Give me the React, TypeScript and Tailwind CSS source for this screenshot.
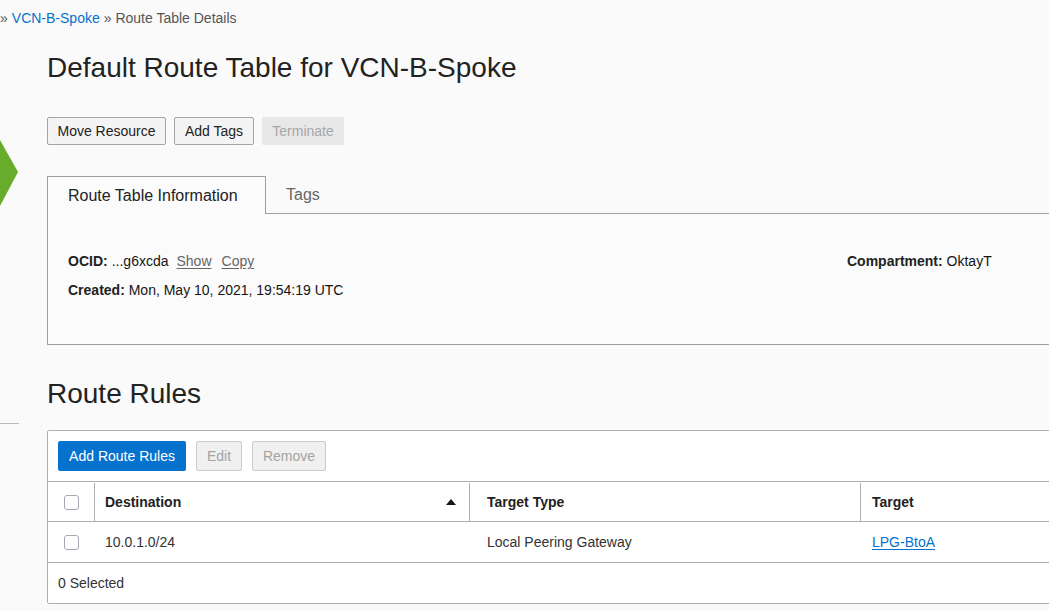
import React from "react";

const font = { fontFamily: '"Liberation Sans", Arial, sans-serif' };

const Checkbox = () => (
  <div className="w-[15px] h-[15px] rounded-[3px] border border-[#a3a9ae] bg-white"></div>
);

const App = () => {
  return (
    <div
      style={font}
      className="w-[1049px] h-[611px] overflow-hidden bg-[#fafafa] text-[#161513] text-[14px]"
    >
      {/* breadcrumb */}
      <div className="h-[36px] flex items-center text-[#555] leading-5 whitespace-nowrap">
        <span>»</span>
        <a className="ml-[4px] text-[#0572ce]">VCN-B-Spoke</a>
        <span className="ml-[4px]">» Route Table Details</span>
      </div>

      <div className="flex">
        {/* side strip */}
        <div className="w-[19px] shrink-0 flex flex-col">
          <svg width="19" height="66" viewBox="0 0 19 66" className="mt-[104px]">
            <polygon points="0,0 18,32 0,66" fill="#67ac2a" />
          </svg>
          <div className="mt-[217px] w-[19px] h-px bg-[#b8bcc0]"></div>
        </div>

        {/* main */}
        <div className="ml-[28px] w-[1100px] shrink-0">
          <h1 className="mt-[15px] h-[34px] text-[28px] leading-[34px] text-[#222] whitespace-nowrap">
            Default Route Table for VCN-B-Spoke
          </h1>

          <div className="mt-[32px] flex gap-2">
            <button className="h-[28px] w-[119px] rounded-[2px] border border-[#9ea5ab] bg-[#f4f4f4] text-[#222]">
              Move Resource
            </button>
            <button className="h-[28px] w-[80px] rounded-[2px] border border-[#9ea5ab] bg-[#f4f4f4] text-[#222]">
              Add Tags
            </button>
            <button className="h-[28px] w-[82px] rounded-[2px] border border-[#e6e6e6] bg-[#e8e8e8] text-[#a6a6a6]">
              Terminate
            </button>
          </div>

          {/* tabs */}
          <div className="mt-[31px] flex h-[38px]">
            <div className="w-[219px] border border-b-0 border-[#a0a0a0] bg-[#fbfbfb] flex items-center pl-5 pt-px text-[16px] text-[#222]">
              Route Table Information
            </div>
            <div className="flex-1 border-b border-[#a0a0a0] flex items-center pl-[20px] pt-px text-[16px] text-[#666]">
              Tags
            </div>
          </div>
          <div className="h-[131px] border border-t-0 border-[#a0a0a0] bg-[#fbfbfb] pl-5 pt-[37px] flex">
            <div className="w-[779px] flex flex-col gap-[9px]">
              <div className="leading-5 flex items-center">
                <span className="font-bold text-[#222]">OCID:</span>
                <span className="ml-[4px]">...g6xcda</span>
                <a className="ml-[8px] text-[#666] underline underline-offset-2">Show</a>
                <a className="ml-[10px] text-[#666] underline underline-offset-2">Copy</a>
              </div>
              <div className="leading-5">
                <span className="font-bold text-[#222]">Created:</span>{" "}
                Mon, May 10, 2021, 19:54:19 UTC
              </div>
            </div>
            <div className="leading-5">
              <span className="font-bold text-[#222]">Compartment:</span> OktayT
            </div>
          </div>

          <h2 className="mt-[32px] h-[34px] text-[28px] leading-[34px] text-[#222]">
            Route Rules
          </h2>

          {/* table */}
          <div className="mt-[19px] border border-[#aab0b6] rounded-[2px] bg-white">
            <div className="flex gap-[10px] px-[10px] py-[10px]">
              <button className="h-[30px] w-[128px] rounded-[2px] bg-[#0572ce] text-white">
                Add Route Rules
              </button>
              <button className="h-[30px] w-[46px] rounded-[2px] border border-[#c8cbce] bg-[#f0f0f0] text-[#a3a3a3]">
                Edit
              </button>
              <button className="h-[30px] w-[74px] rounded-[2px] border border-[#c8cbce] bg-[#f0f0f0] text-[#a3a3a3]">
                Remove
              </button>
            </div>

            <div className="flex h-[40px] border-t border-[#aab0b6] pt-px font-bold text-[#222]">
              <div className="w-[47px] flex items-center justify-center border-r border-[#aab0b6]">
                <Checkbox />
              </div>
              <div className="w-[375px] flex items-center pl-[10px] pr-[13px] border-r border-[#aab0b6]">
                <span className="flex-1">Destination</span>
                <svg width="10" height="6" viewBox="0 0 10 6">
                  <polygon points="5,0 10,6 0,6" fill="#161513" />
                </svg>
              </div>
              <div className="w-[391px] flex items-center pl-[17px] border-r border-[#aab0b6]">
                Target Type
              </div>
              <div className="flex-1 flex items-center pl-[11px]">Target</div>
            </div>

            <div className="flex h-[41px] border-t border-[#aab0b6] text-[#333]">
              <div className="w-[47px] flex items-center justify-center">
                <Checkbox />
              </div>
              <div className="w-[375px] flex items-center pl-[10px]">10.0.1.0/24</div>
              <div className="w-[391px] flex items-center pl-[17px]">Local Peering Gateway</div>
              <div className="flex-1 flex items-center pl-[11px]">
                <a className="text-[#0572ce] underline underline-offset-2">LPG-BtoA</a>
              </div>
            </div>

            <div className="h-[41px] border-t border-[#aab0b6] flex items-center pl-[10px] text-[#333]">
              0 Selected
            </div>
          </div>
        </div>
      </div>
    </div>
  );
};

export default App;
